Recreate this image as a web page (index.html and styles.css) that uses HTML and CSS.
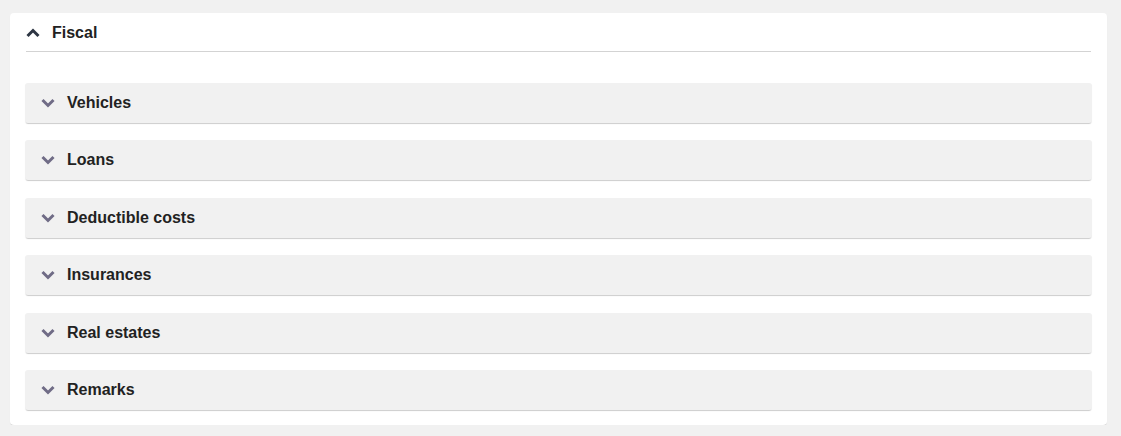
FILE: index.html
```html
<!DOCTYPE html>
<html lang="en">
<head>
  <meta charset="UTF-8">
  <title>Fiscal</title>
  <link rel="stylesheet" href="styles.css">
</head>
<body>
  <div class="card">
    <div class="card-head">
      <svg class="chev up" width="14" height="10" viewBox="0 0 14 10"><polyline points="1.5,8 7,2.5 12.5,8"/></svg>
      <span>Fiscal</span>
    </div>
    <div class="sections">
      <div class="section"><svg class="chev" width="14" height="10" viewBox="0 0 14 10"><polyline points="1.5,2 7,7.5 12.5,2"/></svg><span>Vehicles</span></div>
      <div class="section"><svg class="chev" width="14" height="10" viewBox="0 0 14 10"><polyline points="1.5,2 7,7.5 12.5,2"/></svg><span>Loans</span></div>
      <div class="section"><svg class="chev" width="14" height="10" viewBox="0 0 14 10"><polyline points="1.5,2 7,7.5 12.5,2"/></svg><span>Deductible costs</span></div>
      <div class="section"><svg class="chev" width="14" height="10" viewBox="0 0 14 10"><polyline points="1.5,2 7,7.5 12.5,2"/></svg><span>Insurances</span></div>
      <div class="section"><svg class="chev" width="14" height="10" viewBox="0 0 14 10"><polyline points="1.5,2 7,7.5 12.5,2"/></svg><span>Real estates</span></div>
      <div class="section"><svg class="chev" width="14" height="10" viewBox="0 0 14 10"><polyline points="1.5,2 7,7.5 12.5,2"/></svg><span>Remarks</span></div>
    </div>
  </div>
</body>
</html>
```
FILE: styles.css
```css
body { margin: 0; background: #f1f1f1; font-family: 'Liberation Sans', Arial, sans-serif; color: #222; }
.card { margin: 13px 14px 0 10px; background: #fff; border-radius: 4px; padding: 0 15px 15px; box-shadow: 0 2px 1px -1px rgba(0,0,0,.14), 0 1px 1px rgba(0,0,0,.06); }
.card-head { display: flex; align-items: center; height: 37px; padding-top: 1px; margin: 0 1px; border-bottom: 1px solid #d3d3d3; font-size: 16px; font-weight: bold; }
.card-head .chev { margin: 0 12px 0 0; }
.chev { fill: none; stroke-width: 3; stroke-linecap: butt; stroke-linejoin: miter; }
.chev.up { stroke: #2e3644; }
.sections { padding-top: 31px; display: flex; flex-direction: column; gap: 17.4px; }
.section { display: flex; align-items: center; height: 40px; padding-left: 16px; background: #f1f1f1; border-radius: 3px; font-size: 16px; font-weight: bold; box-shadow: 0 2px 1px -1px rgba(0,0,0,.14), 0 1px 1px rgba(0,0,0,.07); }
.section .chev { stroke: #706c86; margin-right: 12px; }
```
